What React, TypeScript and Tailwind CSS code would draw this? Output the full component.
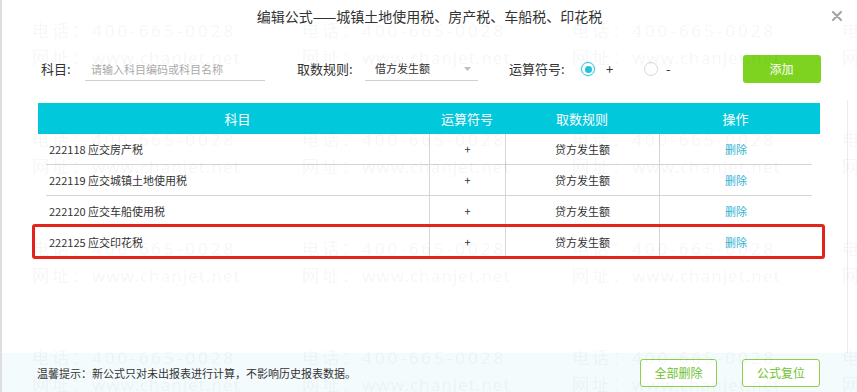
import React from "react";

const rows = [
  { code: "222118 应交房产税" },
  { code: "222119 应交城镇土地使用税" },
  { code: "222120 应交车船使用税" },
  { code: "222125 应交印花税" },
];

const wmCols = [30, 300, 570, 840];
const wmRows = [31, 140, 249, 358];

function Watermark() {
  return (
    <div className="pointer-events-none absolute inset-0 z-20">
      {wmRows.map((y) =>
        wmCols.map((x) => (
          <React.Fragment key={`${x}-${y}`}>
            <span
              className="absolute whitespace-nowrap text-[17px] leading-none tracking-[3px] text-[rgba(0,0,0,0.055)] [font-family:'Noto_Sans','Noto_Sans_CJK_SC',sans-serif]"
              style={{ left: x, top: y - 9 }}
            >
              电话：400-665-0028
            </span>
            <span
              className="absolute whitespace-nowrap text-[17px] leading-none text-[rgba(0,0,0,0.055)] [font-family:'Noto_Sans','Noto_Sans_CJK_SC',sans-serif]"
              style={{ left: x, top: y + 18 }}
            >
              <span className="tracking-[3px]">网址：</span>
              <span className="tracking-[1px]">www.chanjet.net</span>
            </span>
          </React.Fragment>
        ))
      )}
    </div>
  );
}

export default function App() {
  return (
    <div className="relative flex h-[392px] w-[857px] flex-col overflow-hidden border-l-2 border-[#dedede] bg-white text-[#333] [font-family:'Noto_Sans_CJK_SC','Noto_Sans',sans-serif]">
      {/* Title */}
      <div className="relative flex h-[32px] items-center justify-center text-[14px] text-[#333]">
        编辑公式——城镇土地使用税、房产税、车船税、印花税
        <svg
          className="absolute left-[830px] top-[11px]"
          width="10"
          height="10"
          viewBox="0 0 10 10"
        >
          <path d="M1 1L9 9M9 1L1 9" stroke="#a3a3a3" strokeWidth="2" strokeLinecap="round" />
        </svg>
      </div>

      {/* Form row */}
      <div className="mt-[23px] flex h-[28px] items-center pl-[39px]">
        <span className="w-[44px] text-[13px]">科目:</span>
        <div className="flex h-[24px] w-[180px] items-center border-b border-[#cfcfcf] pl-[6px] pt-[1px] text-[11px] text-[#a9a9a9]">
          请输入科目编码或科目名称
        </div>
        <span className="ml-[32px] w-[68px] text-[13px]">取数规则:</span>
        <div className="relative flex h-[23px] w-[113px] items-center border-b border-[#cfcfcf] pl-[10px] text-[11px] text-[#333]">
          借方发生额
          <svg className="absolute right-[7px] top-[9px]" width="7" height="4" viewBox="0 0 7 4">
            <path d="M0 0H7L3.5 4Z" fill="#bdbdbd" />
          </svg>
        </div>
        <span className="ml-[31px] w-[72px] text-[13px]">运算符号:</span>
        <span className="flex h-[14px] w-[14px] items-center justify-center rounded-full border border-[#2ec5dc] shadow-[0_0_0_1px_rgba(46,197,220,0.15)]">
          <span className="h-[7px] w-[7px] rounded-full bg-[#22c2da]" />
        </span>
        <span className="ml-[11px] w-[38px] text-[13px]">+</span>
        <span className="h-[14px] w-[14px] rounded-full border border-[#d8d8d8]" />
        <span className="ml-[8px] text-[13px]">-</span>
        <button className="ml-[72px] flex h-[28px] w-[78px] items-center justify-center rounded-[3px] bg-[#7ed321] text-[12px] text-white">
          添加
        </button>
      </div>

      {/* Table */}
      <div className="relative ml-[36px] mt-[20px] w-[782px]">
        <div className="grid h-[31px] grid-cols-[383px_76px_154px_1fr] items-center bg-[#02c8dc] px-[8px] text-[13px] text-white">
          <div className="text-center">科目</div>
          <div className="text-center">运算符号</div>
          <div className="text-center">取数规则</div>
          <div className="text-center">操作</div>
        </div>
        <div className="px-[8px]">
          {rows.map((r, i) => (
            <div
              key={r.code}
              className={`grid h-[31px] grid-cols-[383px_76px_154px_1fr] text-[11px] ${
                i < rows.length - 1 ? "border-b border-[#d6d6d6]" : ""
              }`}
            >
              <div className="flex items-center pl-[3px]">{r.code}</div>
              <div className="flex items-center justify-center border-l border-[#d6d6d6]">+</div>
              <div className="flex items-center justify-center border-l border-[#d6d6d6]">贷方发生额</div>
              <div className="flex items-center justify-center border-l border-[#d6d6d6] text-[#36b4d2]">删除</div>
            </div>
          ))}
        </div>
        {/* red highlight annotation */}
        <div className="pointer-events-none absolute left-[-6px] top-[121px] h-[35px] w-[793px] rounded-[3px] border-[3px] border-[#e3231c]" />
      </div>

      {/* Right faint edge */}
      <div className="pointer-events-none absolute left-[845px] top-[100px] h-[253px] w-px bg-[#ececec]" />

      {/* Footer */}
      <div className="mt-auto flex h-[39px] items-center bg-[#f4fbfd] pl-[35px] pr-[37px]">
        <span className="pt-[2px] text-[11px] text-[#333]">
          温馨提示：新公式只对未出报表进行计算，不影响历史报表数据。
        </span>
        <button className="ml-auto flex h-[28px] w-[77px] items-center justify-center rounded-[3px] border border-[#8dd04b] bg-white text-[12px] text-[#6fc22e]">
          全部删除
        </button>
        <button className="ml-[25px] flex h-[28px] w-[78px] items-center justify-center rounded-[3px] border border-[#8dd04b] bg-white text-[12px] text-[#6fc22e]">
          公式复位
        </button>
      </div>

      <Watermark />
    </div>
  );
}
